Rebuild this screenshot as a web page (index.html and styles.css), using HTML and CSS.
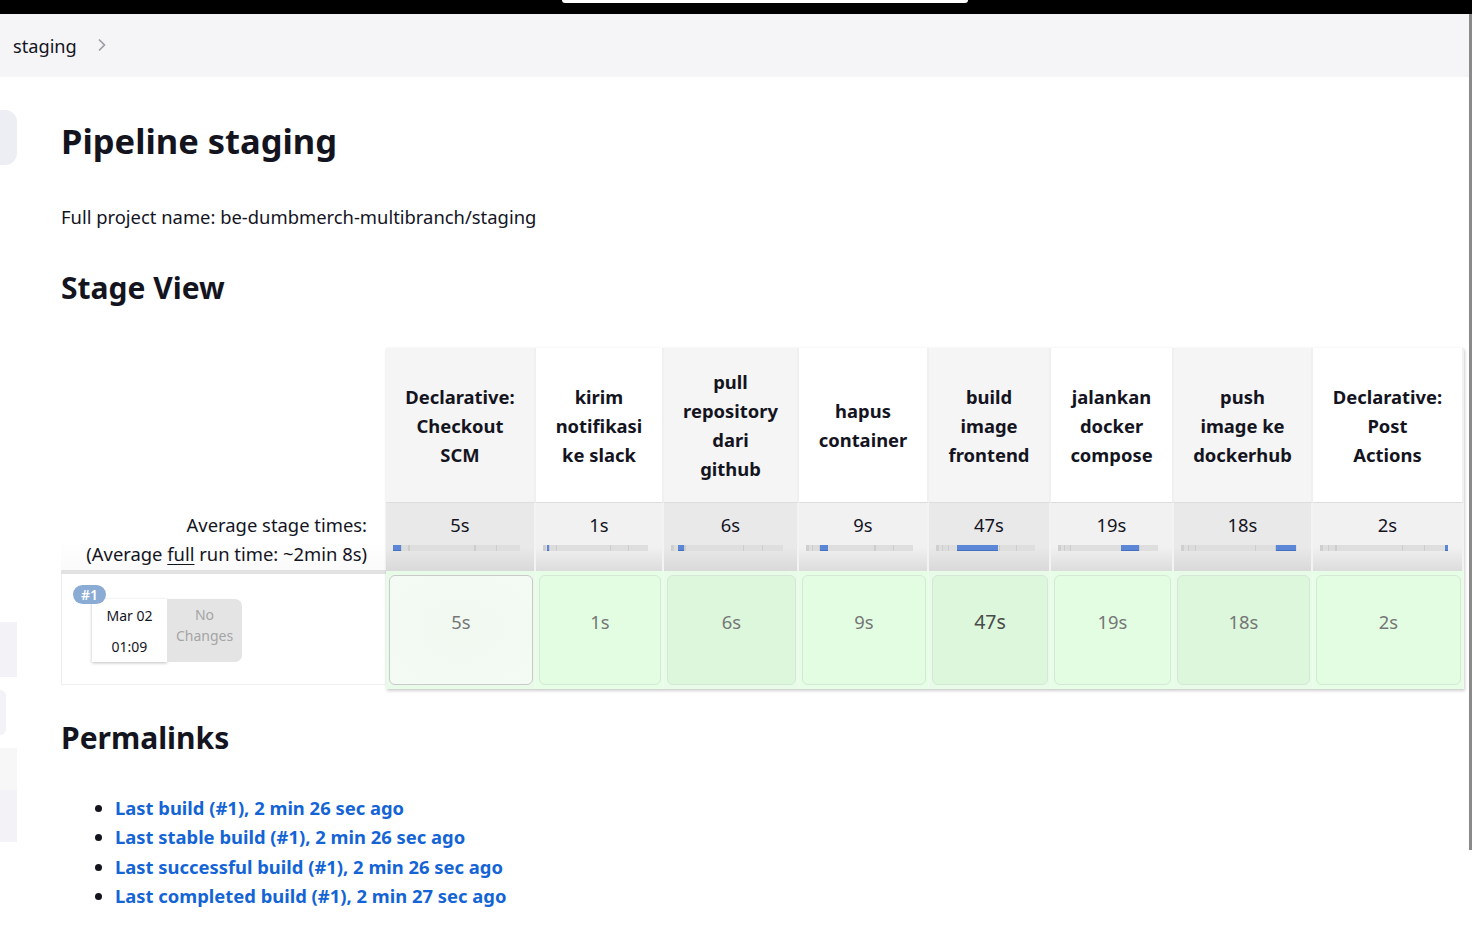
FILE: index.html
```html
<!DOCTYPE html>
<html>
<head>
<meta charset="utf-8">
<link rel="stylesheet" href="styles.css">
</head>
<body>
<div class="topbar"><div class="pill"></div></div>
<div class="frame">
  <div class="page">
    <div class="breadcrumb">
      <span class="crumb">staging</span>
      <svg class="chev" width="10" height="14" viewBox="0 0 10 14"><path d="M2 1.5 L7.5 7 L2 12.5" fill="none" stroke="#9a9aa6" stroke-width="1.6"/></svg>
    </div>
    <div class="body-row">
      <div class="sidebar">
        <div class="sb sb1"></div>
        <div class="sb sb2"></div>
        <div class="sb sb3"></div>
        <div class="sb sb4"></div>
        <div class="sb sb5"></div>
      </div>
      <div class="main">
        <h1 class="title">Pipeline staging</h1>
        <p class="fullname">Full project name: be-dumbmerch-multibranch/staging</p>
        <h2 class="section">Stage View</h2>

        <div class="stageview">
          <div class="leftcol">
            <div class="lc-head"></div>
            <div class="lc-avg">
              <div>Average stage times:</div>
              <div>(Average <u>full</u> run time: ~2min 8s)</div>
            </div>
            <div class="lc-build">
              <div class="badge">#1</div>
              <div class="buildinfo">
                <div class="date"><div>Mar 02</div><div>01:09</div></div>
                <div class="changes">No<br>Changes</div>
              </div>
            </div>
          </div>
          <div class="stages">
            <div class="hd odd">Declarative: Checkout SCM</div>
            <div class="hd even">kirim notifikasi ke slack</div>
            <div class="hd odd">pull repository dari github</div>
            <div class="hd even">hapus container</div>
            <div class="hd odd">build image frontend</div>
            <div class="hd even">jalankan docker compose</div>
            <div class="hd odd">push image ke dockerhub</div>
            <div class="hd even">Declarative: Post Actions</div>

            <div class="avg odd"><div class="t">5s</div><div class="bar"><span style="left:0%;width:6%"></span></div></div>
            <div class="avg even"><div class="t">1s</div><div class="bar"><span style="left:4%;width:2%"></span></div></div>
            <div class="avg odd"><div class="t">6s</div><div class="bar"><span style="left:6%;width:6%"></span></div></div>
            <div class="avg even"><div class="t">9s</div><div class="bar"><span style="left:13%;width:8%"></span></div></div>
            <div class="avg odd"><div class="t">47s</div><div class="bar"><span style="left:21%;width:42%"></span></div></div>
            <div class="avg even"><div class="t">19s</div><div class="bar"><span style="left:63%;width:18%"></span></div></div>
            <div class="avg odd"><div class="t">18s</div><div class="bar"><span style="left:82%;width:17%"></span></div></div>
            <div class="avg even"><div class="t">2s</div><div class="bar"><span style="left:98%;width:2%"></span></div></div>

            <div class="bc odd"><div class="cell sel">5s</div></div>
            <div class="bc even"><div class="cell">1s</div></div>
            <div class="bc odd"><div class="cell">6s</div></div>
            <div class="bc even"><div class="cell">9s</div></div>
            <div class="bc odd"><div class="cell dark">47s</div></div>
            <div class="bc even"><div class="cell">19s</div></div>
            <div class="bc odd"><div class="cell">18s</div></div>
            <div class="bc even"><div class="cell">2s</div></div>
          </div>
        </div>

        <h2 class="section perma">Permalinks</h2>
        <ul class="links">
          <li><a href="#">Last build (#1), 2 min 26 sec ago</a></li>
          <li><a href="#">Last stable build (#1), 2 min 26 sec ago</a></li>
          <li><a href="#">Last successful build (#1), 2 min 26 sec ago</a></li>
          <li><a href="#">Last completed build (#1), 2 min 27 sec ago</a></li>
        </ul>
      </div>
    </div>
  </div>
  <div class="scrollbar"><div class="thumb"></div></div>
</div>
</body>
</html>
```

FILE: styles.css
```css
html, body {
  margin: 0;
  padding: 0;
  background: #fff;
}
body {
  font-family: "Noto Sans", "Open Sans", sans-serif;
  color: #14141f;
  width: 1472px;
  height: 948px;
  overflow: hidden;
}
.topbar {
  height: 14px;
  background: #000;
  display: flex;
  padding-left: 562px;
}
.pill {
  width: 406px;
  height: 3px;
  background: #fff;
  border-radius: 0 0 8px 8px;
}
.frame {
  display: flex;
}
.page {
  flex: 1;
}
.scrollbar {
  width: 3px;
}
.thumb {
  height: 836px;
  background: #8a8a8a;
}
.breadcrumb {
  height: 63px;
  background: #f5f5f7;
  display: flex;
  align-items: center;
  padding-left: 13px;
  gap: 20px;
}
.crumb {
  font-size: 18.2px;
  color: #14141f;
}
.chev {
  margin-top: -2px;
}
.body-row {
  display: flex;
}
.sidebar {
  width: 17px;
  display: flex;
  flex-direction: column;
  padding-top: 33px;
}
.sb {
  background: #edeef3;
}
.sb1 { height: 55px; border-radius: 0 12px 12px 0; }
.sb2 { height: 55px; margin-top: 457px; background: #f2f2f7; }
.sb3 { height: 45px; width: 6px; margin-top: 13px; border-radius: 0 8px 8px 0; background: #f2f2f7; }
.sb4 { height: 42px; margin-top: 13px; background: #f7f7f7; }
.sb5 { height: 52px; background: #f2f2f7; }
.main {
  flex: 1;
  padding-left: 44px;
}
.title {
  font-size: 34.5px;
  font-weight: 700;
  margin: 39px 0 0;
  line-height: 50px;
}
.fullname {
  font-size: 18.4px;
  margin: 38px 0 0;
  line-height: 26px;
}
.section {
  font-size: 30px;
  font-weight: 700;
  margin: 38px 0 0;
  line-height: 40px;
}
.stageview {
  display: flex;
  margin-top: 40px;
  align-items: flex-start;
}
.leftcol {
  width: 325px;
  display: flex;
  flex-direction: column;
}
.lc-head { height: 154px; }
.lc-avg {
  height: 72px;
  text-align: right;
  padding-right: 19px;
  font-size: 18.4px;
  line-height: 29px;
  border-bottom: 4px solid #e2e2e2;
  box-sizing: border-box;
  padding-top: 8px;
  background: linear-gradient(to bottom, #fff 60%, #fafafa 100%);
}
.lc-avg u { text-decoration-thickness: 1px; text-underline-offset: 3px; }
.lc-build {
  height: 111px;
  border: 1px solid #eee;
  border-top: none;
  position: relative;
  box-sizing: border-box;
  padding: 25px 0 0 30px;
}
.badge {
  position: absolute;
  left: 11px;
  top: 11px;
  background: #8aabd3;
  color: #fff;
  font-size: 14px;
  font-weight: 600;
  line-height: 19px;
  padding: 0 8px;
  border-radius: 10px;
  z-index: 2;
}
.buildinfo {
  display: flex;
  height: 63px;
}
.date {
  width: 75px;
  background: #fff;
  box-shadow: 0 1px 3px rgba(0,0,0,0.25);
  display: flex;
  flex-direction: column;
  justify-content: space-between;
  align-items: center;
  font-size: 14px;
  line-height: 20px;
  padding: 7px 0 5px;
  box-sizing: border-box;
}
.changes {
  width: 75px;
  background: #e4e4e4;
  border-radius: 0 7px 7px 0;
  color: #a5a5a5;
  font-size: 14px;
  line-height: 21px;
  text-align: center;
  padding-top: 5px;
  box-sizing: border-box;
}
.stages {
  display: grid;
  grid-template-columns: 150px 128px 135px 130px 122px 123px 139px 151px;
  grid-template-rows: 154px 69px 118px;
  box-shadow: 1px 2px 3px rgba(0,0,0,0.18), 0 0 2px rgba(0,0,0,0.06);
}
.hd {
  display: flex;
  align-items: center;
  justify-content: center;
  text-align: center;
  font-size: 18.4px;
  font-weight: 700;
  line-height: 29px;
  padding: 0 18px;
  box-sizing: border-box;
  border-right: 2px solid #f0f0f0;
}
.hd.odd { background: #f5f5f5; }
.hd.even { background: #fff; }
.avg {
  border-top: 1px solid #ddd;
  border-right: 2px solid #f3f3f3;
  padding: 9px 14px 0 7px;
  box-sizing: border-box;
}
.avg.odd { background: linear-gradient(to bottom, #e9e9e9 65%, #d9d9d9 100%); }
.avg.even { background: linear-gradient(to bottom, #f1f1f1 65%, #dcdcdc 100%); }
.avg .t {
  text-align: center;
  font-size: 18.4px;
  line-height: 26px;
  padding-left: 7px;
}
.bar {
  position: relative;
  height: 6px;
  margin-top: 7px;
  background: linear-gradient(to right, #cfcfcf 0 3px, #dedede 3px 6%, #cdcdcd 6% 7%, #dcdcdc 7% 12%, #cdcdcd 12% 13%, #dedede 13% 64%, #cdcdcd 64% 65%, #dedede 65% 81%, #cdcdcd 81% 82%, #dedede 82% 100%);
}
.bar span {
  position: absolute;
  top: 0;
  bottom: 0;
  background: #5b87d6;
  box-shadow: inset 0 -1px 0 #4470c0;
}
.bc {
  padding: 4px 2px 4px 3px;
  border-right: 1px solid #f0fbf0;
  box-sizing: border-box;
}
.bc.odd { background: #e8fae8; }
.bc.even { background: #e6fde6; }
.cell {
  height: 110px;
  box-sizing: border-box;
  border: 1px solid #d5e8d5;
  border-radius: 6px;
  display: flex;
  align-items: flex-start;
  justify-content: center;
  padding-top: 33px;
  font-size: 18.4px;
  line-height: 26px;
  color: #767676;
  background: #e3fde3;
}
.bc.odd .cell { background: #dcf7dc; }
.bc .cell.sel {
  background: radial-gradient(ellipse at center, #f0f8f0, #f4fbf4);
  border: 1px solid #c9c9c9;
}
.cell.dark { color: #4a4a4a; font-size: 19.5px; }
.perma {
  margin-top: 29px;
}
.links {
  margin: 35px 0 0;
  padding-left: 54px;
  font-size: 18.4px;
  line-height: 29.4px;
}
.links li::marker { color: #14141f; }
.links a {
  color: #1464d6;
  font-weight: 700;
  text-decoration: none;
}
```
